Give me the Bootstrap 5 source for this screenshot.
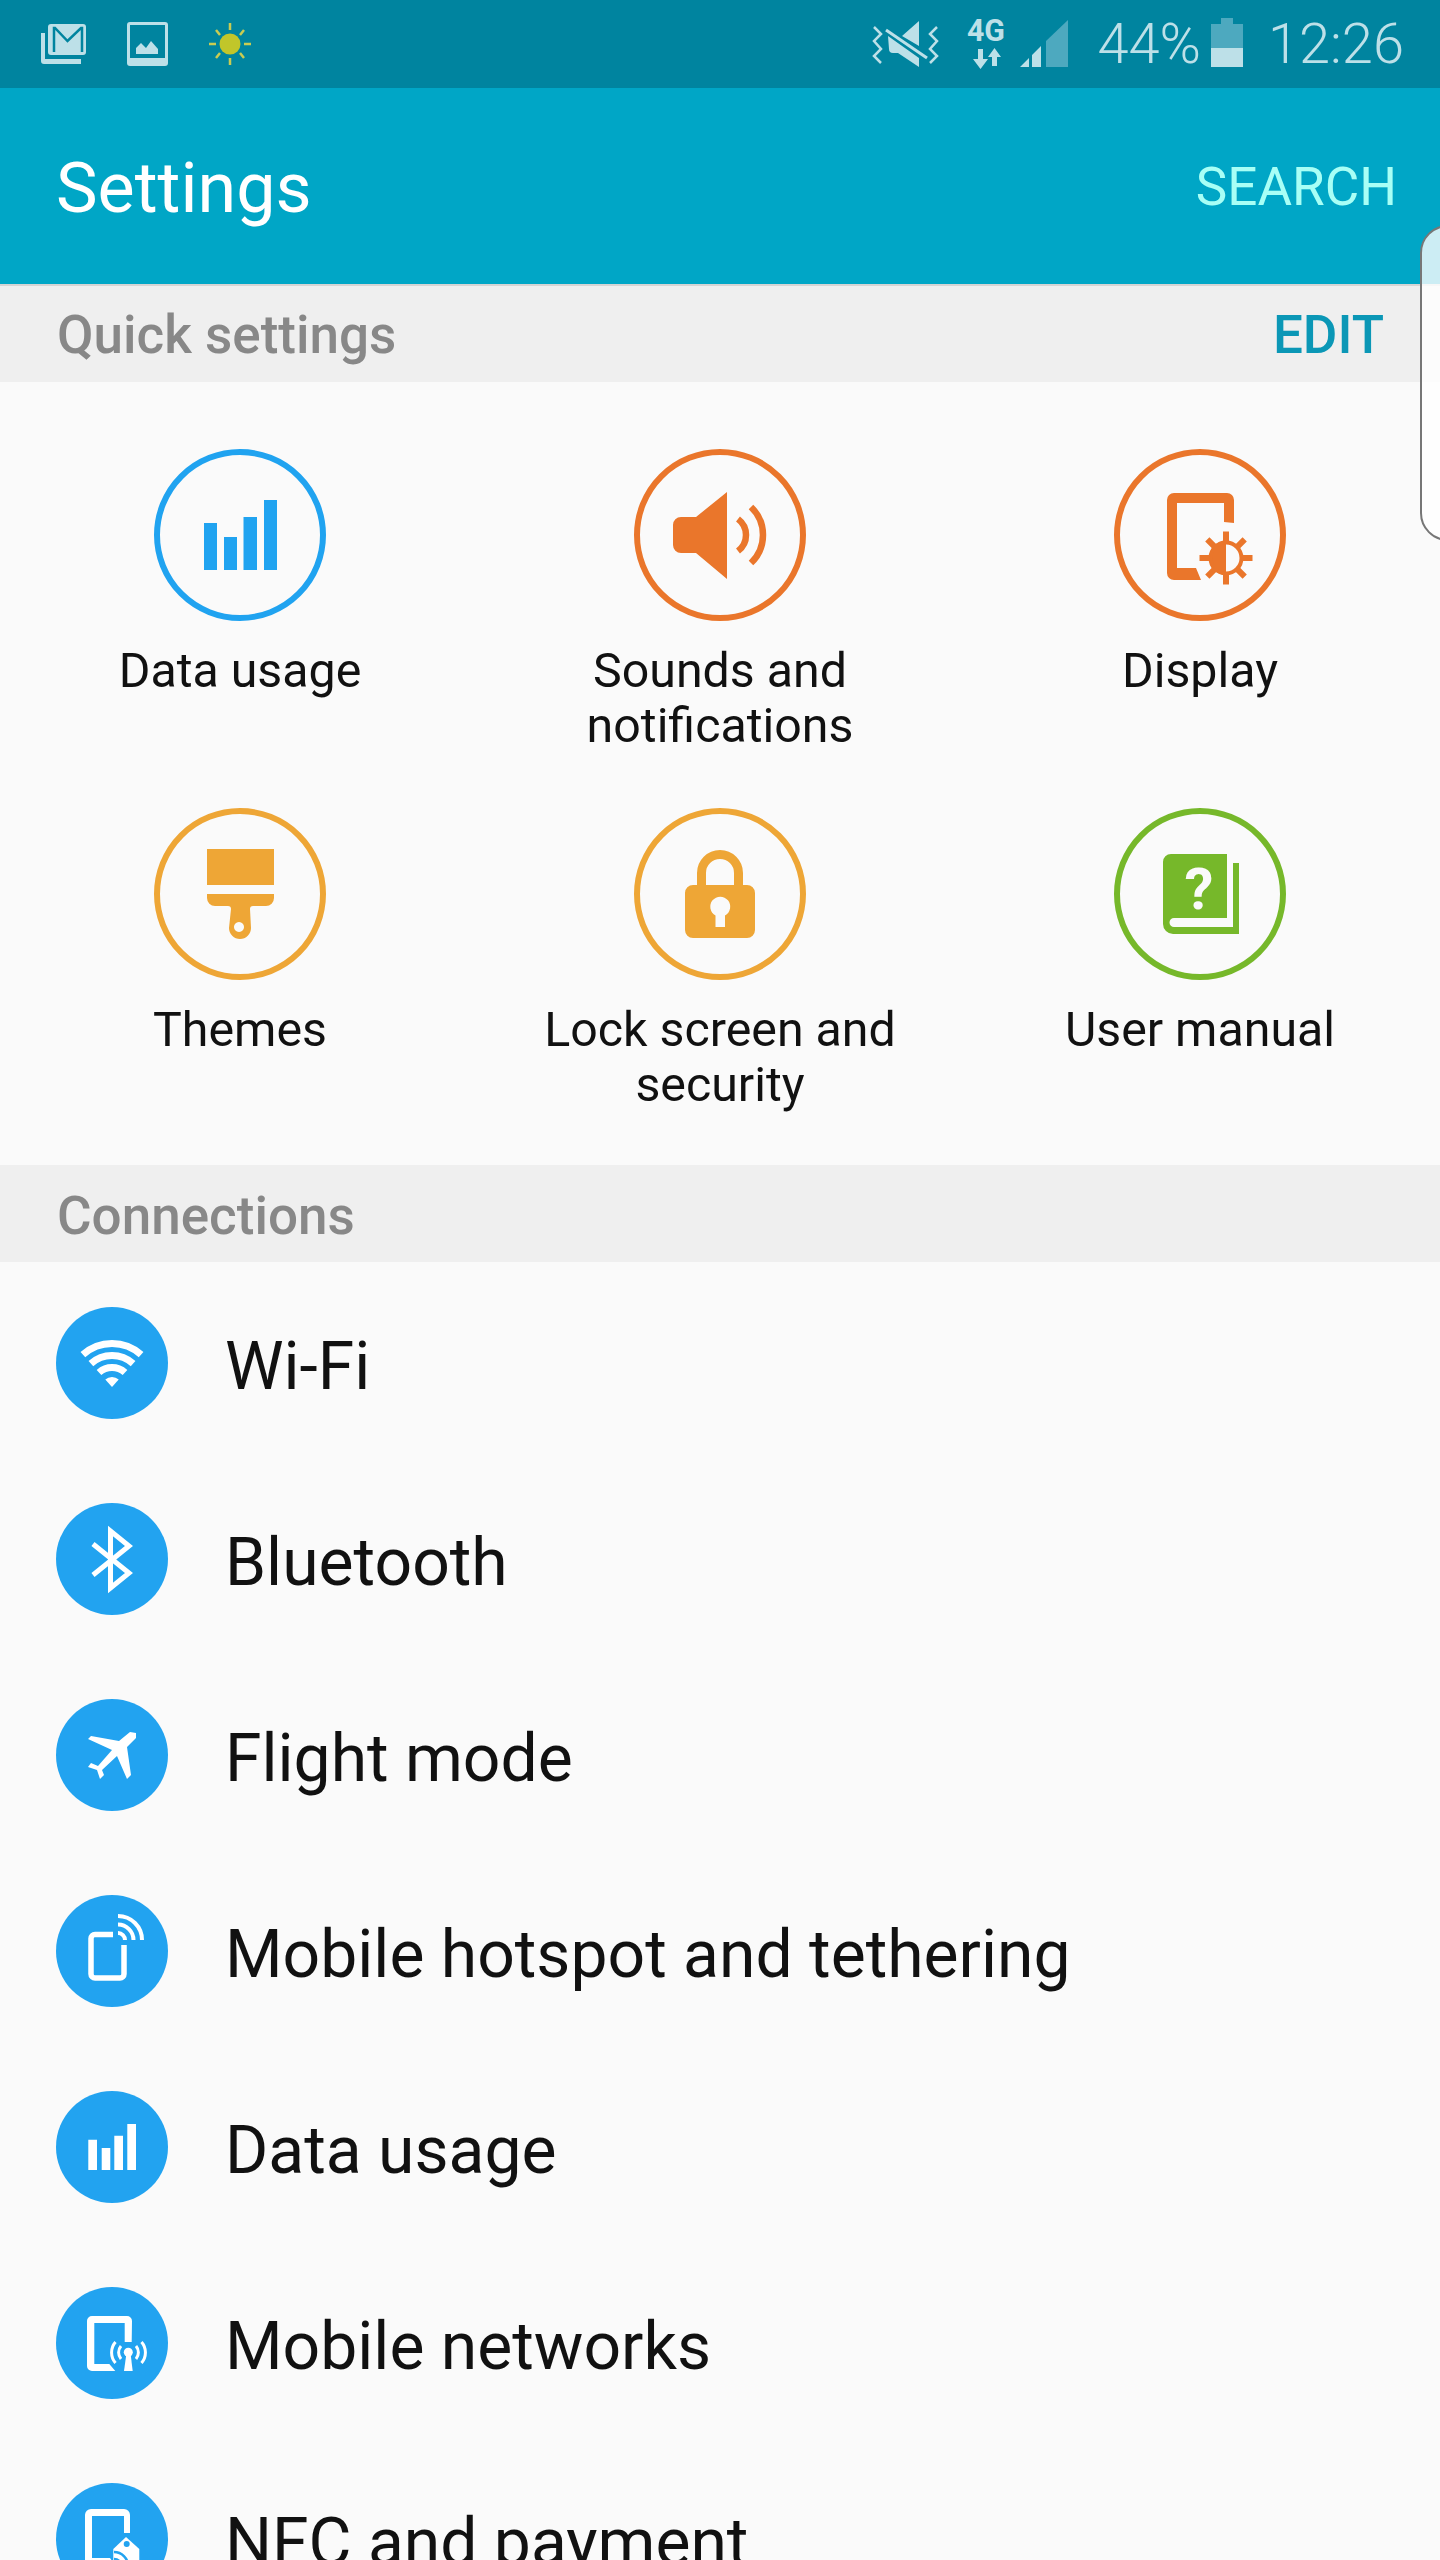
<!DOCTYPE html>
<html lang="en">
<head>
    <meta charset="UTF-8">
    <meta name="viewport" content="width=device-width, initial-scale=1.0">
    <title>Settings</title>
    <link href="https://cdn.jsdelivr.net/npm/bootstrap@5.3.0/dist/css/bootstrap.min.css" rel="stylesheet">
    <style>
        html, body { height: 2560px; overflow: hidden; }
        body { background: #fafafa; font-family: Roboto, "Liberation Sans", sans-serif; color: #111; position: relative; }

        .status-strip { height: 88px; background: #00849f; color: #bde0e8; padding: 0 36px 0 41px; }
        .status-strip svg { display: block; height: 88px; }
        .status-left { gap: 41px; }
        .status-pct { font-size: 56px; font-weight: 300; margin: 0 10px 0 29px; line-height: 88px; }
        .status-time { font-size: 56px; font-weight: 300; margin-left: 25px; line-height: 88px; }
        .status-fill { fill: #bde0e8; }
        .status-dim { fill: #4da9bf; }

        .app-head { height: 196px; background: #00a6c6; padding: 4px 43px 0 56px; }
        .app-title { font-size: 70px; color: #fff; margin: 0; font-weight: 400; }
        .app-search { font-size: 53px; color: #a8fff6; font-weight: 400; }

        .section-head { height: 98px; background: #efefef; padding: 4px 57px 0; border-top: 2px solid #d4d4d4; font-size: 53px; font-weight: 500; color: #888; }
        .section-edit { color: #0b97b6; margin-right: -1px; }
        .section-flat { border-top: 0; height: 97px; padding-top: 6px; }

        .quick-grid { padding: 67px 0 52px; row-gap: 54px; }
        .quick-cell { height: 305px; }
        .quick-cell svg { display: block; margin: 0 auto 22px; }
        .quick-label { font-size: 48.300px; line-height: 55px; }

        .menu-list { padding-top: 3px; background: transparent; }
        .menu-row { height: 196px; padding: 6px 0 0 56px; gap: 57px; background: transparent; border: 0; font-size: 66px; color: #111; }
        .menu-row svg { flex: none; margin-top: -6px; }

        .edge-handle { position: absolute; top: 225px; right: -12px; width: 32px; height: 316px; border: 2px solid #777; border-radius: 28px 0 0 28px; background: rgba(255,255,255,.8); }
    </style>
</head>
<body>

    <!-- Status bar -->
    <div class="status-strip d-flex align-items-center justify-content-between">
        <div class="status-left d-flex">
            <svg width="45" viewBox="41 0 45 88">
                <path class="status-fill" d="M41 33h4v26h36v5H44a3 3 0 0 1-3-3z"/>
                <rect class="status-fill" x="48" y="24" width="38" height="31" rx="3"/>
                <path d="M54 52V28h1l12.500 13L81 28h1v24" fill="none" stroke="#00849f" stroke-width="2.500"/>
            </svg>
            <svg width="41" viewBox="127 0 41 88">
                <rect class="status-fill" x="127" y="22" width="41" height="44" rx="3"/>
                <rect x="130" y="25" width="35" height="33" fill="#00849f"/>
                <path class="status-fill" d="M136 54v-6l5-5 5 5 5-7 7 8v5z"/>
            </svg>
            <svg width="42" viewBox="210 0 42 88">
                <ellipse cx="231" cy="44" rx="10.500" ry="10.500" fill="#c1c62a"/>
                <path d="M231 23v7M231 58v7M210 44h7M245 44h7M217 30l4 5M245 30l-4 5M217 58l4-5M245 58l-4-5" stroke="#c9cc52" stroke-width="2.500" fill="none"/>
            </svg>
        </div>
        <div class="d-flex align-items-center">
            <svg width="196" viewBox="871 0 196 88">
                <path class="status-fill" d="M918 21l-17 15 17 10zM887 36l31 22v9l-21-14h-5q-4 0-4-4z"/>
                <path d="M885 30l41 28" stroke="#bde0e8" stroke-width="3" fill="none"/>
                <path d="M873 27l7 7-7 7 7 8-7 7 7 7M936 27l-7 7 7 7-7 8 7 7-7 7" stroke="#bde0e8" stroke-width="2.500" fill="none"/>
                <text x="966" y="41" font-family="Roboto" font-weight="700" font-size="31" textLength="38" lengthAdjust="spacingAndGlyphs" fill="#bde0e8">4G</text>
                <path class="status-fill" d="M977 49h5v10h5l-7.500 10-7.500-10h5zM991 66h5v-9h4l-6.500-9-6.500 9h4z"/>
                <path class="status-fill" d="M1019 67l9-9v9zM1031 55l9-9v21h-9z"/>
                <path class="status-dim" d="M1045 41l22-21v47h-22z"/>
            </svg>
            <span class="status-pct">44%</span>
            <svg width="32" viewBox="1212 0 32 88">
                <path class="status-dim" d="M1222 18h12v6h10v24h-32V24h10z"/>
                <rect class="status-fill" x="1212" y="48" width="32" height="19"/>
            </svg>
            <span class="status-time">12:26</span>
        </div>
    </div>

    <!-- App bar -->
    <div class="app-head d-flex align-items-center justify-content-between">
        <h1 class="app-title">Settings</h1>
        <span class="app-search">SEARCH</span>
    </div>

    <!-- Quick settings -->
    <div class="section-head d-flex align-items-center justify-content-between">
        <span>Quick settings</span>
        <span class="section-edit">EDIT</span>
    </div>
    <div class="quick-grid row g-0">
        <div class="quick-cell col-4 text-center">
            <svg width="172" height="172" viewBox="0 0 172 172">
                <circle cx="86" cy="86" r="83" fill="none" stroke="#20a3f0" stroke-width="6"/>
                <path fill="#20a3f0" d="M50 74h13v47H50zM70 88h13v33H70zM89.500 68H103v53H89.500zM110 51h13v70h-13z"/>
            </svg>
            <div class="quick-label">Data usage</div>
        </div>
        <div class="quick-cell col-4 text-center">
            <svg width="172" height="172" viewBox="0 0 172 172">
                <circle cx="86" cy="86" r="83" fill="none" stroke="#ea762b" stroke-width="6"/>
                <path fill="#ea762b" d="M93 43v87L62 104H47a8 8 0 0 1-8-8V76a8 8 0 0 1 8-8h15z"/>
                <path d="M104 70a20 20 0 0 1 0 32M117 58a38.700 38.700 0 0 1 0 56" fill="none" stroke="#ea762b" stroke-width="6.500"/>
            </svg>
            <div class="quick-label">Sounds and<br>notifications</div>
        </div>
        <div class="quick-cell col-4 text-center">
            <svg width="172" height="172" viewBox="0 0 172 172">
                <circle cx="86" cy="86" r="83" fill="none" stroke="#ea762b" stroke-width="6"/>
                <path fill="#ea762b" d="M120 74l-10-1V54H63v65h19l5 12H60a7 7 0 0 1-7-7V51a7 7 0 0 1 7-7h53a7 7 0 0 1 7 7z"/>
                <path fill="#ea762b" d="M112 92a17 17 0 0 0 0 34z"/>
                <circle cx="112" cy="109" r="15.500" fill="none" stroke="#ea762b" stroke-width="4"/>
                <path d="M112 82.500v11M112 124.500v11M85.500 109h11M127.500 109h11M93.300 90.300l7.500 7.500M123.200 120.200l7.500 7.500M93.300 127.700l7.500-7.500M123.200 97.800l7.500-7.500" stroke="#ea762b" stroke-width="6" fill="none"/>
            </svg>
            <div class="quick-label">Display</div>
        </div>
        <div class="quick-cell col-4 text-center">
            <svg width="172" height="172" viewBox="0 0 172 172">
                <circle cx="86" cy="86" r="83" fill="none" stroke="#eea636" stroke-width="6"/>
                <path fill="#eea636" d="M53 41h67v36H53z"/>
                <path fill="#eea636" fill-rule="evenodd" d="M53 86h67v4a8 8 0 0 1-8 8H99q-3 0-3 3l1 19a11 11 0 0 1-22 0l2-19q0-3-3-3H61a8 8 0 0 1-8-8zM85 114a5 5 0 1 0 .01 0z"/>
            </svg>
            <div class="quick-label">Themes</div>
        </div>
        <div class="quick-cell col-4 text-center">
            <svg width="172" height="172" viewBox="0 0 172 172">
                <circle cx="86" cy="86" r="83" fill="none" stroke="#eea636" stroke-width="6"/>
                <path d="M67.500 78V65a18.500 18.500 0 0 1 37 0v13" fill="none" stroke="#eea636" stroke-width="9"/>
                <path fill="#eea636" fill-rule="evenodd" d="M59 77h54a8 8 0 0 1 8 8v37a8 8 0 0 1-8 8H59a8 8 0 0 1-8-8V85a8 8 0 0 1 8-8zM81.500 107.500V119h9.500v-11.500a10 10 0 1 0-9.500 0z"/>
            </svg>
            <div class="quick-label">Lock screen and<br>security</div>
        </div>
        <div class="quick-cell col-4 text-center">
            <svg width="172" height="172" viewBox="0 0 172 172">
                <circle cx="86" cy="86" r="83" fill="none" stroke="#76b82a" stroke-width="6"/>
                <path fill="#76b82a" d="M57 46h56v64H60a4.500 4.500 0 0 0 0 9h59V55h6v71H59a10 10 0 0 1-10-10V54a8 8 0 0 1 8-8z"/>
                <text x="85" y="101" text-anchor="middle" font-family="Roboto" font-weight="700" font-size="58" fill="#fafafa">?</text>
            </svg>
            <div class="quick-label">User manual</div>
        </div>
    </div>

    <!-- Connections -->
    <div class="section-head section-flat d-flex align-items-center">
        <span>Connections</span>
    </div>
    <div class="menu-list list-group list-group-flush">
        <div class="menu-row list-group-item d-flex align-items-center">
            <svg width="112" height="112" viewBox="0 0 112 112">
                <circle cx="56" cy="56" r="56" fill="#22a3f0"/>
                <path d="M26.900 47.700a43.500 43.500 0 0 1 58.200 0M34.900 56.600a31.500 31.500 0 0 1 42.200 0M43 65.500a19.500 19.500 0 0 1 26 0" fill="none" stroke="#fff" stroke-width="7"/>
                <path fill="#fff" d="M56 80l-6.700-7.400a10 10 0 0 1 13.400 0z"/>
            </svg>
            <span>Wi-Fi</span>
        </div>
        <div class="menu-row list-group-item d-flex align-items-center">
            <svg width="112" height="112" viewBox="0 0 112 112">
                <circle cx="56" cy="56" r="56" fill="#22a3f0"/>
                <path d="M37 41l36 29-18.500 15V28L73 43 37 72" fill="none" stroke="#fff" stroke-width="5"/>
            </svg>
            <span>Bluetooth</span>
        </div>
        <div class="menu-row list-group-item d-flex align-items-center">
            <svg width="112" height="112" viewBox="0 0 112 112">
                <circle cx="56" cy="56" r="56" fill="#22a3f0"/>
                <path fill="#fff" d="M32 40l3-3 28 5 11-9 6 1v5l-9 9 4 28-4 4-10-23-15 14 2 5-4 4-3-9-9-3 3-4 7 3 14-16z"/>
            </svg>
            <span>Flight mode</span>
        </div>
        <div class="menu-row list-group-item d-flex align-items-center">
            <svg width="112" height="112" viewBox="0 0 112 112">
                <circle cx="56" cy="56" r="56" fill="#22a3f0"/>
                <path d="M57 39.500H39a4 4 0 0 0-4 4V79a4 4 0 0 0 4 4h25a4 4 0 0 0 4-4V50" fill="none" stroke="#fff" stroke-width="5.500"/>
                <path d="M62 38a7 7 0 0 1 7 7M62 29.500A15.500 15.500 0 0 1 77.500 45M62 21a24 24 0 0 1 24 24" fill="none" stroke="#fff" stroke-width="4"/>
            </svg>
            <span>Mobile hotspot and tethering</span>
        </div>
        <div class="menu-row list-group-item d-flex align-items-center">
            <svg width="112" height="112" viewBox="0 0 112 112">
                <circle cx="56" cy="56" r="56" fill="#22a3f0"/>
                <path fill="#fff" d="M32.300 48.700H41V79h-8.700zM45.700 57h8.600v22h-8.600zM58.300 44.700H67V79h-8.700zM71.300 33H80v46h-8.700z"/>
            </svg>
            <span>Data usage</span>
        </div>
        <div class="menu-row list-group-item d-flex align-items-center">
            <svg width="112" height="112" viewBox="0 0 112 112">
                <circle cx="56" cy="56" r="56" fill="#22a3f0"/>
                <path fill="#fff" d="M75.700 55h-7V36H38.300v41h15l6 7H36a5 5 0 0 1-5-5V34a5 5 0 0 1 5-5h35a5 5 0 0 1 5 5z"/>
                <circle cx="72.300" cy="65.300" r="4.500" fill="#fff"/>
                <path fill="#fff" d="M70.500 66h4l2.200 18H68z"/>
                <path d="M65 59a10 10 0 0 0 0 13M80 59a10 10 0 0 1 0 13M59.500 55a16 16 0 0 0 0 21M85.500 55a16 16 0 0 1 0 21" fill="none" stroke="#fff" stroke-width="3"/>
            </svg>
            <span>Mobile networks</span>
        </div>
        <div class="menu-row list-group-item d-flex align-items-center">
            <svg width="112" height="112" viewBox="0 0 112 112">
                <circle cx="56" cy="56" r="56" fill="#22a3f0"/>
                <path fill="#fff" d="M74 50h-6V33H36v42h18l5 7H35a6 6 0 0 1-6-6V32a6 6 0 0 1 6-6h33a6 6 0 0 1 6 6z"/>
                <path fill="#fff" d="M70 54l13.300 12v34h-26V66z"/>
                <circle cx="70.700" cy="61" r="3" fill="#22a3f0"/>
                <path d="M58 69a14 14 0 0 1 14 14M58 76a8 8 0 0 1 8 8" fill="none" stroke="#22a3f0" stroke-width="2.500"/>
            </svg>
            <span>NFC and payment</span>
        </div>
    </div>

    <!-- Edge panel handle -->
    <div class="edge-handle"></div>

    <script src="https://cdn.jsdelivr.net/npm/bootstrap@5.3.0/dist/js/bootstrap.bundle.min.js"></script>
</body>
</html>
